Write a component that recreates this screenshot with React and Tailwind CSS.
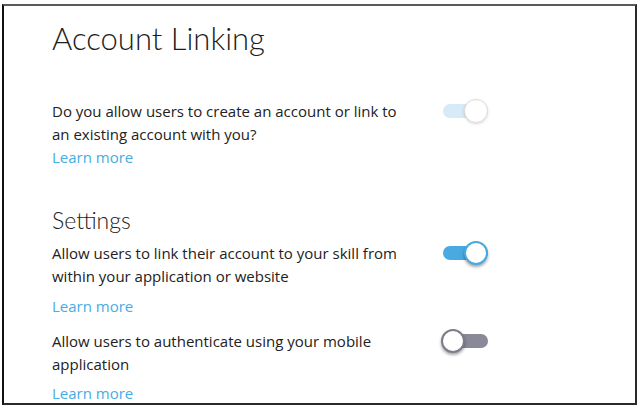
import React from 'react';

const Toggle = ({ state }) => {
  const track = {
    disabled: 'bg-[#d6ebf7]',
    on: 'bg-[#48aae0]',
    off: 'bg-[#8a8997]',
  }[state];
  const knob = {
    disabled: 'right-0 border border-[#dcdcdc] shadow-[0_1px_3px_rgba(0,0,0,0.15)]',
    on: 'right-0 border-2 border-[#48aae0] shadow-[0_2px_3px_rgba(0,0,0,0.35)]',
    off: 'left-0 border-2 border-[#7d7c8a] shadow-[0_2px_3px_rgba(0,0,0,0.35)]',
  }[state];
  return (
    <div className="relative w-[47px] h-[24px] shrink-0">
      <div className={`absolute left-[2px] right-0 top-[5px] h-[14px] rounded-full ${track}`} />
      <div className={`absolute top-0 w-[24px] h-[24px] rounded-full bg-white ${knob}`} />
    </div>
  );
};

const Row = ({ text, state, linkGap, className = '' }) => (
  <div className={`flex items-start ${className}`}>
    <div className="w-[362px]">
      <p className="text-[15px] leading-[23px] text-[#222]">{text}</p>
      <a className={`block text-[15px] leading-[23px] text-[#46ace4] ${linkGap}`}>Learn more</a>
    </div>
    <div className="ml-[27px] mt-[-1px]">
      <Toggle state={state} />
    </div>
  </div>
);

export default function App() {
  return (
    <div className="w-[640px] h-[407px] bg-white pt-[4px] pl-[2px] pr-[3px] pb-[2px] overflow-hidden" style={{ fontFamily: '"Open Sans", sans-serif' }}>
      <div className="h-full border-2 border-[#2a2a2a] border-t-[#5a5a5a] border-l-[#111] pl-[48px] overflow-hidden">
        <h1 className="mt-[12px] text-[31px] leading-[40px] font-light text-[#1c1c1c]" style={{ fontFamily: 'Lato, sans-serif' }}>
          Account Linking
        </h1>
        <Row
          className="mt-[42px]"
          text="Do you allow users to create an account or link to an existing account with you?"
          state="disabled"
          linkGap=""
        />
        <h2 className="mt-[37px] text-[23px] leading-[28px] font-light text-[#1c1c1c]" style={{ fontFamily: 'Lato, sans-serif' }}>
          Settings
        </h2>
        <Row
          className="mt-[8px]"
          text="Allow users to link their account to your skill from within your application or website"
          state="on"
          linkGap="mt-[7px]"
        />
        <Row
          className="mt-[12px]"
          text="Allow users to authenticate using your mobile application"
          state="off"
          linkGap="mt-[6px]"
        />
      </div>
    </div>
  );
}
